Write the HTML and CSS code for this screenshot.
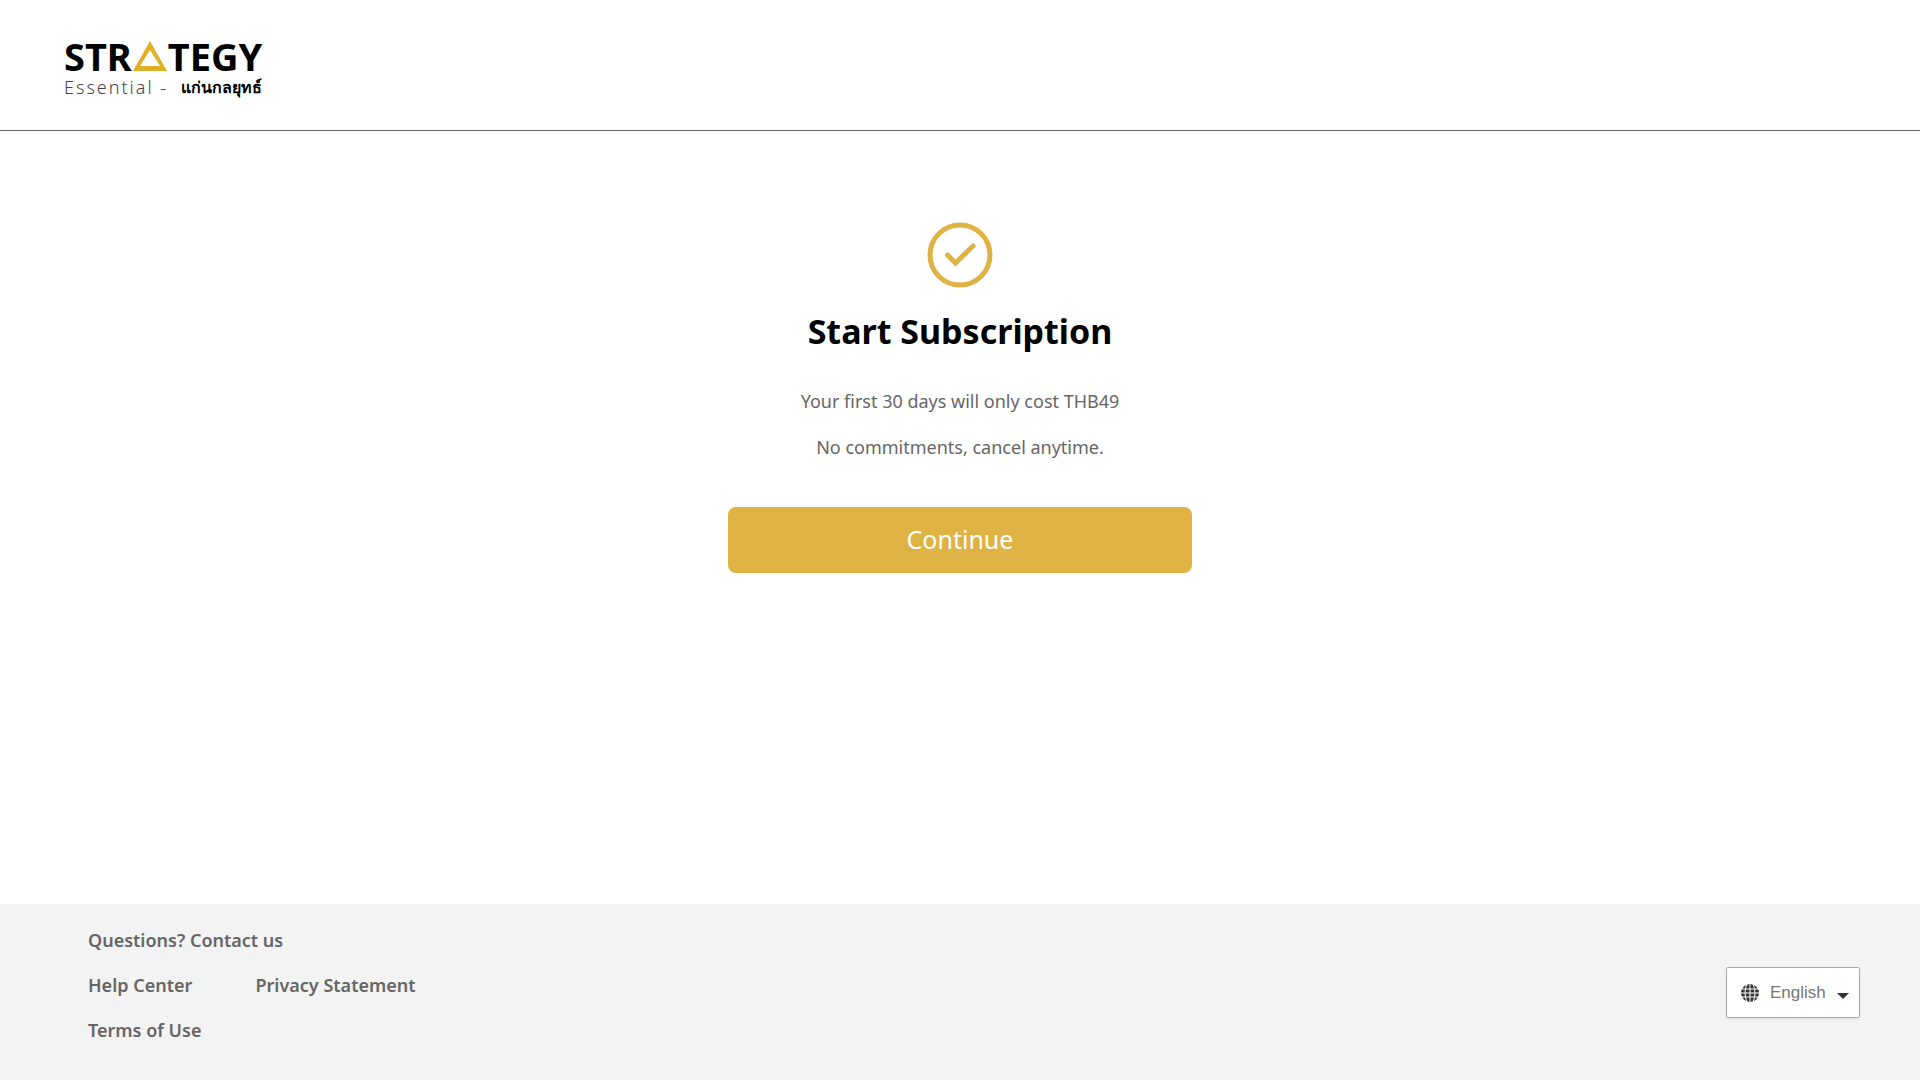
FILE: index.html
```html
<!DOCTYPE html>
<html lang="en">
<head>
<meta charset="utf-8">
<meta name="viewport" content="width=device-width, initial-scale=1">
<title>Start Subscription</title>
<link rel="stylesheet" href="styles.css">
</head>
<body>
<header class="header">
  <a class="logo" href="#" aria-label="Strategy Essential">
    <span class="logo-name">
      <span>STR</span>
      <svg class="logo-mark" viewBox="0 0 34 30" aria-hidden="true"><path fill="#e0af25" fill-rule="evenodd" d="M17 0 34 30H0ZM17 9 7 25H27Z"/></svg>
      <span>TEGY</span>
    </span>
    <span class="logo-tag">
      <span class="logo-essential">Essential -</span>
      <span class="logo-thai" lang="th">แก่นกลยุทธ์</span>
    </span>
  </a>
</header>
<main class="main">
  <svg class="check" viewBox="0 0 66 66" aria-hidden="true"><g fill="none" stroke="#dfb343" stroke-width="5"><circle cx="33" cy="33" r="30"/><path stroke-linecap="round" d="M20.500 33 28.500 41 46 24"/></g></svg>
  <h1 class="title">Start Subscription</h1>
  <p class="text">Your first 30 days will only cost THB49</p>
  <p class="text">No commitments, cancel anytime.</p>
  <button class="continue" type="button">Continue</button>
</main>
<footer class="footer">
  <nav class="links" aria-label="Footer">
    <a class="contact" href="#">Questions? Contact us</a>
    <a href="#">Help Center</a>
    <a href="#">Privacy Statement</a>
    <a href="#">Terms of Use</a>
  </nav>
  <label class="language">
    <svg class="globe" viewBox="0 0 18 18" aria-hidden="true"><circle cx="9" cy="9" r="9" fill="#333"/><path fill="none" stroke="#fff" stroke-width="1" d="M9 0V18M0 9H18M1 5H17M1 13H17M6 0Q2 9 6 18M12 0Q16 9 12 18"/></svg>
    <select class="language-select" aria-label="Language"><option>English</option></select>
    <svg class="arrow" viewBox="0 0 12 6" aria-hidden="true"><path fill="#333" d="M0 0H12L6 6Z"/></svg>
  </label>
</footer>
</body>
</html>
```
FILE: styles.css
```css
* {
  box-sizing: border-box;
}

body {
  margin: 0;
  min-height: 100vh;
  display: flex;
  flex-direction: column;
  background: #fff;
  color: #666;
  font-family: "Noto Sans", "Open Sans", sans-serif;
}

a {
  color: inherit;
  text-decoration: none;
}

.header {
  padding: 36px 64px 32px;
  border-bottom: 1px solid #666;
}

.logo {
  display: inline-flex;
  flex-direction: column;
  vertical-align: top;
  color: #000;
}

.logo-name {
  display: flex;
  align-items: center;
  gap: 1px;
  font-size: 38px;
  font-weight: 700;
  line-height: 40px;
}

.logo-mark {
  width: 34px;
  height: 30px;
}

.logo-tag {
  display: flex;
  justify-content: space-between;
  line-height: 22px;
}

.logo-essential {
  color: #444;
  font-size: 18px;
  font-weight: 300;
  letter-spacing: 2px;
}

.logo-thai {
  font-size: 16px;
  font-weight: 700;
}

.main {
  flex: 1;
  width: 100%;
  max-width: 464px;
  margin: 0 auto;
  padding-top: 91px;
  text-align: center;
}

.check {
  display: block;
  width: 66px;
  height: 66px;
  margin: 0 auto;
}

.title {
  margin: 19px 0 32px;
  color: #000;
  font-size: 34px;
  line-height: 48px;
}

.text {
  margin: 0 0 18px;
  font-size: 18px;
  line-height: 28px;
}

.continue {
  width: 100%;
  height: 66px;
  margin-top: 28px;
  padding: 0 0 2px;
  border: 0;
  border-radius: 8px;
  background: #dfb343;
  color: #fff;
  font: 400 25px "Noto Sans", "Open Sans", sans-serif;
}

.footer {
  display: flex;
  align-items: center;
  justify-content: space-between;
  padding: 14px 60px 27px 88px;
  background: #f3f3f3;
}

.links {
  display: grid;
  grid-template-columns: auto auto;
  column-gap: 54px;
  font-size: 18px;
  font-weight: 600;
  line-height: 45px;
}

.contact {
  grid-column: 1 / -1;
}

.language {
  display: flex;
  align-items: center;
  gap: 11px;
  height: 51px;
  margin-top: 14px;
  padding: 0 10px 0 14px;
  border: 1px solid #aaa;
  border-radius: 2px;
  background: #fff;
  box-shadow: 0 1px 2px #ddd;
}

.globe {
  width: 18px;
  height: 18px;
}

.language-select {
  appearance: none;
  padding: 0;
  border: 0;
  background: none;
  color: #777;
  font: 17px "Liberation Sans", Arial, sans-serif;
}

.arrow {
  width: 12px;
  height: 6px;
  margin-top: 6px;
}
```
